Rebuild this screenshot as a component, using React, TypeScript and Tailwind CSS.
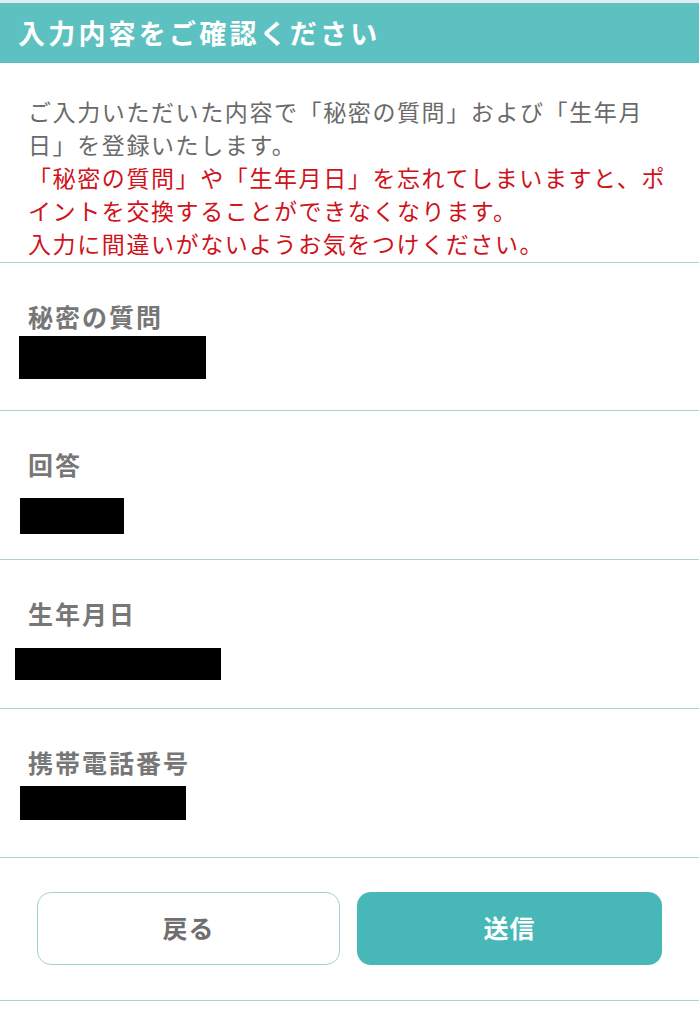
import React from 'react';

const items = [
  { label: '秘密の質問', h: 'h-[148px]', box: 'mt-[5px] ml-[19px] w-[187px] h-[43px]' },
  { label: '回答', h: 'h-[149px]', box: 'mt-[19px] ml-[20px] w-[104px] h-[36px]' },
  { label: '生年月日', h: 'h-[149px]', box: 'mt-[20px] ml-[15px] w-[206px] h-[32px]' },
  { label: '携帯電話番号', h: 'h-[149px]', box: 'mt-[9px] ml-[20px] w-[166px] h-[34px]' },
];

export default function App() {
  return (
    <div className="w-[699px] h-[1024px] bg-white font-['Noto_Sans_CJK_JP','Noto_Sans',sans-serif] overflow-hidden">
      <div className="h-[3px] bg-[#e3ecec]" />
      <div className="h-[60px] bg-[#5cc1c0] flex items-center pl-[18px] pb-[2px]">
        <h1 className="text-white font-bold text-[27px] tracking-[3.2px] leading-none">入力内容をご確認ください</h1>
      </div>

      <div className="pt-[32px] pb-[2px] pl-[28px] pr-[20px] text-[23px] leading-[33px] tracking-[1.6px] border-b border-[#a9d4d6]">
        <p className="text-[#6a6a6a]">
          ご入力いただいた内容で「秘密の質問」および「生年月日」を登録いたします。
        </p>
        <p className="text-[#d0121b]">
          「秘密の質問」や「生年月日」を忘れてしまいますと、ポイントを交換することができなくなります。
          <br />
          入力に間違いがないようお気をつけください。
        </p>
      </div>

      {items.map((item) => (
        <div key={item.label} className={`${item.h} border-b border-[#a9d4d6] pt-[38px]`}>
          <div className="pl-[28px] text-[25px] leading-[30px] font-bold text-[#777777] tracking-[2px]">
            {item.label}
          </div>
          <div className={`bg-black ${item.box}`} />
        </div>
      ))}

      <div className="h-[143px] border-b border-[#a9d4d6] flex items-center gap-[17px] px-[37px] pb-[2px]">
        <button className="w-[303px] h-[73px] rounded-[14px] border border-[#a3d0d3] bg-white text-[#6f6f6f] text-[25px] font-bold tracking-[1px]">
          戻る
        </button>
        <button className="w-[305px] h-[73px] rounded-[14px] bg-[#47b8b7] text-white text-[25px] font-bold tracking-[1px]">
          送信
        </button>
      </div>
    </div>
  );
}
